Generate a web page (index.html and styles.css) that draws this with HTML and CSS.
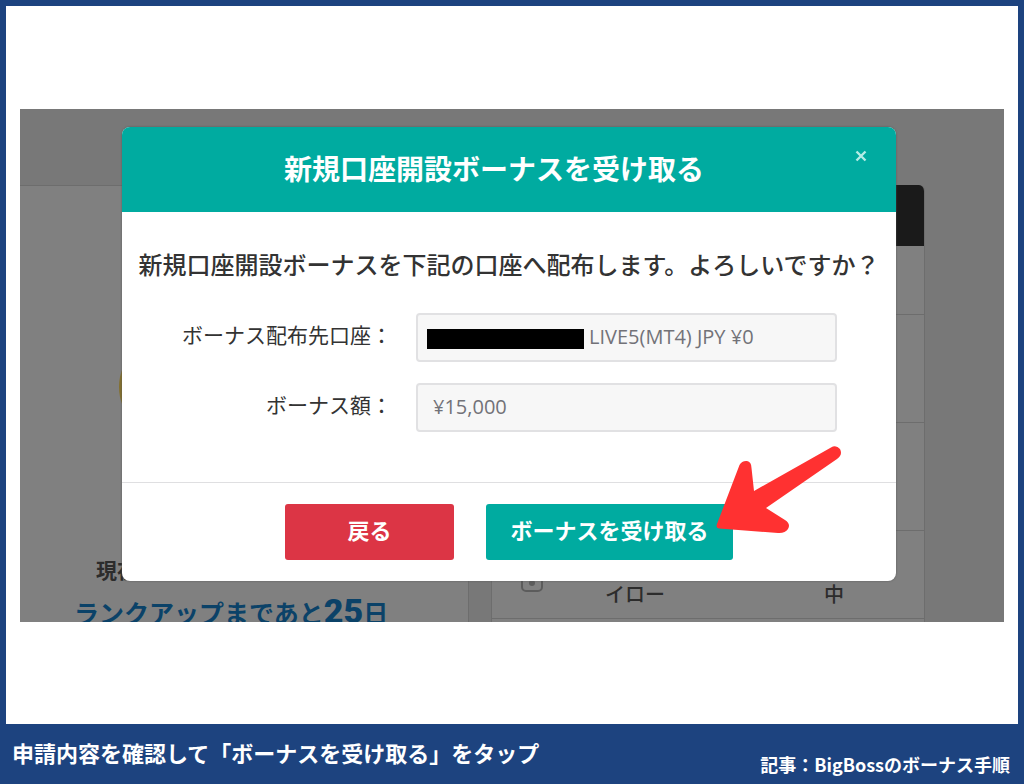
FILE: index.html
```html
<!DOCTYPE html>
<html lang="ja">
<head>
<meta charset="utf-8">
<meta name="viewport" content="width=device-width, initial-scale=1">
<title>BigBossのボーナス手順</title>
<link rel="stylesheet" href="styles.css">
</head>
<body>
<main class="stage">
  <div class="shot">
    <div class="backpage">
      <div class="backpage-bar"></div>
      <div class="backpage-columns">
        <section class="rank-card">
          <svg class="medal" viewBox="0 0 100 100" aria-hidden="true"><circle cx="50" cy="50" r="50" fill="#83702f"/></svg>
          <p class="rank-now">現在</p>
          <p class="rank-next">ランクアップまであと<strong>25</strong>日</p>
        </section>
        <section class="list-card">
          <table class="list">
            <thead><tr><th class="col-icon"></th><th class="col-name"></th><th class="col-level"></th></tr></thead>
            <tbody>
              <tr class="row-short"><td></td><td></td><td></td></tr>
              <tr><td></td><td></td><td></td></tr>
              <tr><td></td><td></td><td></td></tr>
              <tr class="row-last">
                <td><svg class="row-icon" viewBox="0 0 22 20" aria-hidden="true"><rect x="1" y="1" width="20" height="18" rx="4" fill="none" stroke="#5c5c5c" stroke-width="2"/><circle cx="11" cy="11" r="3" fill="#5c5c5c"/></svg></td>
                <td class="name">イロー</td>
                <td>中</td>
              </tr>
            </tbody>
          </table>
        </section>
      </div>
    </div>

    <div class="dialog" role="dialog" aria-labelledby="dialog-title">
      <header class="dialog-header">
        <h1 id="dialog-title" class="dialog-title">新規口座開設ボーナスを受け取る</h1>
        <button class="close" type="button" aria-label="閉じる">
          <svg viewBox="0 0 12 12" aria-hidden="true"><path d="M1.5 1.5 10.5 10.5M10.5 1.5 1.5 10.5" stroke="#b5ece6" stroke-width="2.4" fill="none"/></svg>
        </button>
      </header>
      <form class="dialog-form">
        <div class="dialog-body">
          <p class="question">新規口座開設ボーナスを下記の口座へ配布します。よろしいですか？</p>
          <div class="fields">
            <label for="account">ボーナス配布先口座：</label>
            <div class="field field-masked">
              <span class="mask"></span>
              <input id="account" type="text" value="LIVE5(MT4) JPY ¥0" readonly>
            </div>
            <label for="amount">ボーナス額：</label>
            <div class="field">
              <input id="amount" type="text" value="¥15,000" readonly>
            </div>
          </div>
        </div>
        <footer class="dialog-footer">
          <button class="btn btn-back" type="button">戻る</button>
          <div class="receive">
            <button class="btn btn-receive" type="button">ボーナスを受け取る</button>
            <svg class="arrow" viewBox="0 0 126 88" aria-hidden="true"><path d="M115 1.500Q120-1.500 124 3Q127 9 121 13L50 62L69 74Q75 78 72 83Q69 87.500 62 87L3 82.500Q-0.500 82 1 78L23.500 19Q26 14.500 31 15Q35.500 16 35.500 22L38 45Z" fill="#ff3131"/></svg>
          </div>
        </footer>
      </form>
    </div>
  </div>
</main>
<footer class="caption">
  <p class="caption-main">申請内容を確認して「ボーナスを受け取る」をタップ</p>
  <p class="caption-source">記事：BigBossのボーナス手順</p>
</footer>
</body>
</html>
```
FILE: styles.css
```css
* { box-sizing: border-box; }

body {
  margin: 0;
  min-height: 100vh;
  display: flex;
  flex-direction: column;
  background: #1d437f;
  color: #333;
  font-family: "Noto Sans CJK JP", sans-serif;
}

p, h1 { margin: 0; }

.stage {
  flex: 1;
  display: flex;
  align-items: center;
  margin: 6px 6px 0;
  padding: 14px;
  background: #fff;
}

.shot {
  position: relative;
  flex: 1;
  padding: 18px 108px 41px 102px;
  overflow: hidden;
}

/* Dimmed page behind the dialog */
.backpage {
  position: absolute;
  inset: 0;
  overflow: hidden;
  background: #787878;
  color: #2c2c2c;
}

.backpage-bar { height: 76px; }

.backpage-columns {
  display: flex;
  gap: 22px;
  padding-right: 79px;
}

.rank-card {
  flex: 449;
  height: 450px;
  padding-top: 151px;
  background: #808080;
  border-top: 1px solid #6d6d6d;
  border-right: 1px solid #6d6d6d;
}

.medal {
  display: block;
  width: 100px;
  height: 100px;
  margin-left: 99px;
}

.rank-now {
  margin-top: 114px;
  padding: 0 76px;
  font-size: 21px;
  font-weight: 700;
  line-height: 36px;
}

.rank-next {
  padding-left: 54px;
  color: #0b4268;
  font-size: 25px;
  font-weight: 700;
  line-height: 48px;
  white-space: nowrap;
}

.rank-next strong {
  font-family: Roboto, sans-serif;
  font-size: 34px;
}

.list-card {
  flex: 433;
  height: 450px;
  background: #808080;
  border: 1px solid #6d6d6d;
  border-top: 0;
  border-radius: 6px 6px 0 0;
  overflow: hidden;
}

.list {
  width: 100%;
  border-collapse: collapse;
  table-layout: fixed;
  font-size: 20px;
  font-weight: 500;
  text-align: center;
}

.list th { height: 61px; background: #1a1a1a; }
.list td { height: 108px; padding: 0; border-bottom: 1px solid #6d6d6d; }
.list .row-short td { height: 69px; }
.list .row-last td { height: 88px; padding-top: 49px; vertical-align: top; line-height: 28px; }
.list .row-last .name { padding-right: 46px; }
.col-icon { width: 80px; }
.col-level { width: 180px; }

.row-icon {
  display: block;
  width: 22px;
  height: 20px;
  margin: -8px auto 0;
}

/* Dialog */
.dialog {
  position: relative;
  background: #fff;
  border-radius: 8px;
  box-shadow: 0 0 2px #555;
}

.dialog-header {
  position: relative;
  display: flex;
  align-items: center;
  justify-content: center;
  min-height: 85px;
  padding: 0 30px 2px 0;
  background: #00aba0;
  border-radius: 8px 8px 0 0;
}

.dialog-title {
  color: #fff;
  font-size: 28px;
  font-weight: 700;
  line-height: 40px;
}

.close {
  position: absolute;
  top: 17px;
  right: 23px;
  width: 24px;
  height: 24px;
  padding: 6px;
  border: 0;
  background: none;
}

.close svg { display: block; width: 12px; height: 12px; }

.dialog-body { padding: 34px 0 50px; }

.question {
  margin-bottom: 31px;
  font-size: 24px;
  font-weight: 500;
  line-height: 36px;
  text-align: center;
  white-space: nowrap;
}

.fields {
  display: grid;
  grid-template-columns: 270px minmax(0, 1fr);
  column-gap: 24px;
  row-gap: 21px;
  align-items: center;
  padding-right: 59px;
}

.fields label {
  padding-bottom: 6px;
  font-size: 21px;
  line-height: 30px;
  text-align: right;
}

.field {
  display: flex;
  align-items: center;
  height: 49px;
  padding: 0 15px;
  background: #f7f7f7;
  border: 2px solid #e1e1e3;
  border-radius: 4px;
}

.field-masked { gap: 5px; padding-left: 9px; }

.mask {
  flex: none;
  width: 157px;
  height: 20px;
  margin-top: 3px;
  background: #000;
}

.field input {
  flex: 1;
  min-width: 0;
  padding: 0;
  border: 0;
  outline: 0;
  background: none;
  color: #727278;
  font-family: "Open Sans", sans-serif;
  font-size: 20px;
  line-height: 28px;
}

.dialog-footer {
  display: flex;
  justify-content: center;
  gap: 32px;
  padding: 21px;
  border-top: 1px solid #dfdfe1;
}

.btn {
  height: 56px;
  padding: 0 22px 6px;
  border: 0;
  border-radius: 3px;
  color: #fff;
  font-family: inherit;
  font-size: 22px;
  font-weight: 700;
}

.btn-back { width: 169px; background: #dc3545; }
.btn-receive { width: 247px; background: #00aba0; }

.receive { position: relative; }

.arrow {
  position: absolute;
  top: -58px;
  left: 230px;
  width: 126px;
  height: 88px;
}

/* Caption strip */
.caption {
  display: flex;
  justify-content: space-between;
  min-height: 60px;
  padding: 0 14px 0 12px;
  color: #fff;
  font-weight: 700;
}

.caption-main { padding-top: 12px; font-size: 22px; line-height: 32px; }
.caption-source { align-self: flex-end; padding-bottom: 7px; font-size: 18px; line-height: 26px; }
```
